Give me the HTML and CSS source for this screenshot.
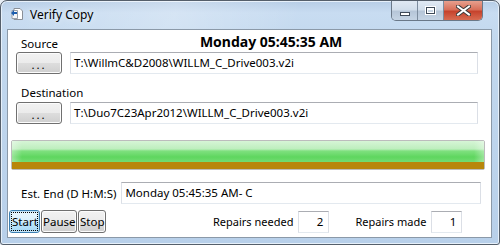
FILE: index.html
```html
<!DOCTYPE html>
<html>
<head>
<meta charset="utf-8">
<link rel="stylesheet" href="styles.css">
</head>
<body>
<div class="window">
  <div class="titlebar">
    <svg class="app-icon" width="14" height="14" viewBox="0 0 14 14">
      <path d="M4 1.5h6l2.5 2.5v8.5h-8.5z" fill="#fff" stroke="#8a8f96"/>
      <path d="M2 3.5h5.5v8h-5.5z" fill="#f4f6f8" stroke="#9aa0a8"/>
      <path d="M1 6l3-3v2h3v2h-3v2z" fill="#1f5fae"/>
    </svg>
    <span class="title">Verify Copy</span>
    <div class="caption">
      <div class="cbtn min"><span class="min-glyph"></span></div>
      <div class="cbtn max"><span class="max-glyph"></span></div>
      <div class="cbtn close">
        <svg width="15" height="11" viewBox="0 0 15 11">
          <path d="M2 1.5l5.5 4 5.5-4M2 9.5l5.5-4 5.5 4" stroke="#3b3b3b" stroke-width="4" fill="none" stroke-linecap="square"/>
          <path d="M2 1.5l5.5 4 5.5-4M2 9.5l5.5-4 5.5 4" stroke="#fff" stroke-width="2" fill="none" stroke-linecap="square"/>
        </svg>
      </div>
    </div>
  </div>
  <div class="client">
    <div class="head-row">
      <span class="label">Source</span>
      <span class="clock">Monday 05:45:35 AM</span>
    </div>
    <div class="path-row">
      <button class="btn browse">...</button>
      <div class="textbox wide">T:\WillmC&amp;D2008\WILLM_C_Drive003.v2i</div>
    </div>
    <div class="label dest">Destination</div>
    <div class="path-row">
      <button class="btn browse">...</button>
      <div class="textbox wide">T:\Duo7C23Apr2012\WILLM_C_Drive003.v2i</div>
    </div>
    <div class="progress">
      <div class="green"></div>
      <div class="brown"></div>
    </div>
    <div class="est-row">
      <span class="label">Est. End (D H:M:S)</span>
      <div class="textbox est">Monday 05:45:35 AM- C</div>
    </div>
    <div class="bottom-row">
      <button class="btn small focus"><span>Start</span></button>
      <button class="btn small pause">Pause</button>
      <button class="btn small stop">Stop</button>
      <span class="rep-label needed">Repairs needed</span>
      <div class="textbox num">2</div>
      <span class="rep-label made">Repairs made</span>
      <div class="textbox num">1</div>
    </div>
  </div>
</div>
</body>
</html>
```
FILE: styles.css
```css
html, body {
  margin: 0;
  padding: 0;
  width: 500px;
  height: 245px;
  overflow: hidden;
  background: #e8eef5;
}
body {
  font-family: "Noto Sans", "Open Sans", sans-serif;
  font-size: 11.5px;
  color: #000;
}
.window {
  box-sizing: border-box;
  width: 500px;
  height: 245px;
  border: 1px solid #555f6b;
  border-radius: 7px 7px 3px 3px;
  background: linear-gradient(180deg, #b6cde6 0px, #c8dcf1 12px, #c2d8ee 40px, #b8d0ea 100%);
  box-shadow: inset 0 0 0 1px #e6f0fa;
  display: flex;
  flex-direction: column;
  overflow: hidden;
}
.titlebar {
  height: 28px;
  display: flex;
  align-items: flex-start;
  background: linear-gradient(100deg, rgba(255,255,255,0) 0%, rgba(255,255,255,0.25) 35%, rgba(255,255,255,0) 60%);
}
.app-icon {
  margin: 6px 0 0 9px;
}
.title {
  margin: 5px 0 0 6px;
  font-size: 12px;
  color: #000;
  text-shadow: 0 0 6px rgba(255,255,255,0.9);
}
.caption {
  margin-left: auto;
  margin-right: 16px;
  display: flex;
  height: 19px;
  border: 1px solid #6a7888;
  border-top: none;
  border-radius: 0 0 5px 5px;
  overflow: hidden;
}
.cbtn {
  height: 19px;
  display: flex;
  align-items: center;
  justify-content: center;
  box-sizing: border-box;
}
.min, .max {
  width: 26px;
  background: linear-gradient(180deg, #e0e9f3 0%, #d2deeb 45%, #b6c6d8 55%, #c5d4e4 100%);
  border-right: 1px solid #7c8c9e;
}
.min-glyph {
  width: 8px;
  height: 2px;
  margin-top: 6px;
  background: #fff;
  border: 1px solid #3e4a58;
}
.max-glyph {
  width: 7px;
  height: 5px;
  margin-top: -1px;
  border: 1px solid #3e4a58;
  box-shadow: inset 0 2px 0 #fff, inset 0 0 0 1px #fff, 0 0 0 1px #fff;
  background: #c9d6e4;
}
.close {
  width: 38px;
  background: linear-gradient(180deg, #e7a08e 0%, #d8705a 45%, #c6432d 55%, #d86c52 100%);
}
.client {
  box-sizing: border-box;
  margin: 0 7px 0 6px;
  height: 209px;
  background: #fff;
  border: 1px solid #8b99a8;
  display: flex;
  flex-direction: column;
}
.label {
  font-size: 11.5px;
}
.head-row {
  display: flex;
  align-items: flex-end;
  height: 22px;
  padding-left: 13px;
}
.head-row .label {
  line-height: 16px;
}
.clock {
  margin-left: 142px;
  font-weight: bold;
  font-size: 14px;
  line-height: 18px;
  margin-bottom: 1px;
}
.path-row {
  display: flex;
  align-items: center;
  padding-left: 8px;
  gap: 8px;
  height: 22px;
}
.btn {
  box-sizing: border-box;
  font-family: "Noto Sans", "Open Sans", sans-serif;
  font-size: 11.5px;
  color: #000;
  border: 1px solid #707070;
  border-radius: 3px;
  background: linear-gradient(180deg, #f2f2f2 0%, #ebebeb 50%, #dddddd 51%, #cfcfcf 100%);
  box-shadow: inset 0 0 0 1px #fcfcfc;
  padding: 0;
  margin: 0;
}
.browse {
  width: 46px;
  height: 22px;
  letter-spacing: 2px;
  line-height: 10px;
  padding-top: 4px;
}
.textbox {
  box-sizing: border-box;
  border: 1px solid #dbdfe6;
  border-top-color: #abadb3;
  border-bottom-color: #e3e9ef;
  height: 22px;
  line-height: 20px;
  padding-left: 3px;
  font-size: 11.5px;
  white-space: nowrap;
}
.wide {
  width: 408px;
}
.dest {
  padding-left: 13px;
  margin-top: 9px;
  line-height: 19px;
  height: 19px;
}
.progress {
  box-sizing: border-box;
  margin: 16px 6px 0 3px;
  height: 30px;
  border: 1px solid #bcbcbc;
  border-radius: 2px;
  display: flex;
  flex-direction: column;
  background: #e6e6e6;
}
.green {
  height: 21px;
  background:
    linear-gradient(90deg, rgba(255,255,255,0.35) 0px, rgba(255,255,255,0) 10px, rgba(255,255,255,0) calc(100% - 10px), rgba(255,255,255,0.35) 100%),
    linear-gradient(180deg, #d6f5d6 0px, #bdeebd 8px, #7fe07f 10px, #5fd65f 16px, #72dc72 21px);
}
.brown {
  height: 7px;
  background: #b8860b;
}
.est-row {
  display: flex;
  align-items: center;
  margin-top: 12px;
  height: 22px;
  padding-left: 13px;
}
.est {
  margin-left: 5px;
  width: 360px;
}
.bottom-row {
  display: flex;
  align-items: center;
  margin-top: 6px;
  height: 23px;
  padding-left: 1px;
}
.small {
  height: 23px;
  padding: 0 1px;
  line-height: 19px;
}
.focus {
  width: 31px;
  border-color: #3c7fb1;
  background: linear-gradient(180deg, #eaf6fd 0%, #d9f0fc 50%, #bee6fd 51%, #a7d9f5 100%);
  box-shadow: inset 0 0 0 1px #c6e4f6;
  padding: 1px;
}
.focus span {
  display: block;
  border: 1px dotted #000;
  line-height: 17px;
}
.pause {
  width: 36px;
  margin-left: 1px;
}
.stop {
  width: 28px;
  margin-left: 1px;
}
.rep-label {
  font-size: 11px;
}
.needed {
  margin-left: 107px;
  margin-right: 5px;
}
.made {
  margin-left: 26px;
  margin-right: 5px;
}
.num {
  width: 31px;
  text-align: right;
  padding-right: 5px;
  padding-left: 0;
}
```
